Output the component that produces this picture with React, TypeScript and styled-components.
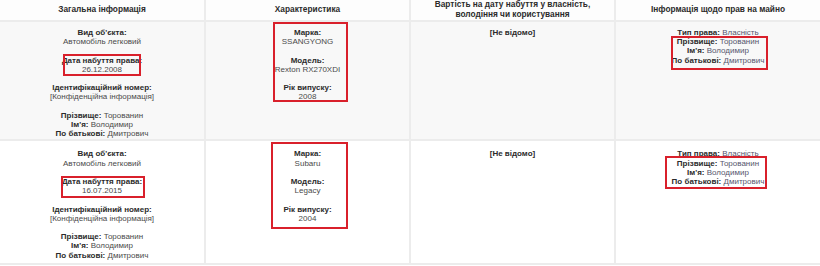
import styled, { createGlobalStyle } from 'styled-components'

const Global = createGlobalStyle`
  html, body {
    margin: 0;
    padding: 0;
    background: #ffffff;
    font-family: "Liberation Sans", Arial, sans-serif;
  }
`

type Inset = [number, number, number, number]

type Person = {
  surname: string
  name: string
  patronymic: string
}

type Vehicle = {
  acquired: string
  brand: string
  model: string
  year: string
  owner: Person
  marks: { date: Inset; specs: Inset; rights: Inset }
}

const vehicles: Vehicle[] = [
  {
    acquired: '26.12.2008',
    brand: 'SSANGYONG',
    model: 'Rexton RX270XDI',
    year: '2008',
    owner: { surname: 'Торованин', name: 'Володимир', patronymic: 'Дмитрович' },
    marks: { date: [-2, 59, -2, 59], specs: [-6, 57, 0, 63], rights: [-1, 48, -5, 51] },
  },
  {
    acquired: '16.07.2015',
    brand: 'Subaru',
    model: 'Legacy',
    year: '2004',
    owner: { surname: 'Торованин', name: 'Володимир', patronymic: 'Дмитрович' },
    marks: { date: [-1, 55, -3, 57], specs: [-7, 57, -6, 61], rights: [-3, 49, -3, 45] },
  },
]

const Table = styled.table`
  width: 820px;
  border-collapse: collapse;
  table-layout: fixed;
  font-size: 8px;
  line-height: 9.2px;
  color: #333;
`

const Head = styled.th`
  height: 19px;
  padding: 0 4px 1px;
  border: 2px solid #ececec;
  border-top: none;
  background: #fdfdfd;
  font-size: 8.3px;
  font-weight: bold;
  color: #2b2b2b;
  text-align: center;
  vertical-align: middle;

  &:first-child { border-left: none; }
  &:last-child { border-right: none; }
`

const Row = styled.tr<{ $shaded?: boolean }>`
  background: ${(p) => (p.$shaded ? '#f8f8f8' : '#ffffff')};
`

const Cell = styled.td<{ $top: number; $bottom: number }>`
  padding: ${(p) => p.$top}px 4px ${(p) => p.$bottom}px;
  border: 2px solid #ececec;
  text-align: center;
  vertical-align: top;

  &:first-child { border-left: none; }
  &:last-child { border-right: none; }
`

const Block = styled.div`
  & + & { margin-top: 9.2px; }
`

const Line = styled.div``

const Label = styled.b`
  font-weight: bold;
  color: #2b2b2b;
`

const Value = styled.span<{ $tone?: 'plain' | 'muted' }>`
  color: ${(p) => (p.$tone === 'muted' ? '#56566e' : '#4a4a4a')};
`

const Mark = styled.div<{ $inset: Inset }>`
  position: relative;

  &::after {
    content: '';
    position: absolute;
    top: ${(p) => p.$inset[0]}px;
    right: ${(p) => p.$inset[1]}px;
    bottom: ${(p) => p.$inset[2]}px;
    left: ${(p) => p.$inset[3]}px;
    border: 2px solid #d9202b;
    pointer-events: none;
  }
`

function Field({ label, value }: { label: string; value: string }) {
  return (
    <Block>
      <Line><Label>{label}</Label></Line>
      <Line><Value>{value}</Value></Line>
    </Block>
  )
}

function Inline({ label, value, tone }: { label: string; value: string; tone?: 'plain' | 'muted' }) {
  return (
    <Line>
      <Label>{label}</Label> <Value $tone={tone}>{value}</Value>
    </Line>
  )
}

type RowProps = { v: Vehicle; shaded?: boolean; top: number; bottom: number }

function VehicleRow({ v, shaded, top, bottom }: RowProps) {
  return (
    <Row $shaded={shaded}>
      <Cell $top={top} $bottom={bottom}>
        <Field label="Вид об'єкта:" value="Автомобіль легковий" />
        <Block>
          <Mark $inset={v.marks.date}>
            <Line><Label>Дата набуття права:</Label></Line>
            <Line><Value>{v.acquired}</Value></Line>
          </Mark>
        </Block>
        <Field label="Ідентифікаційний номер:" value="[Конфіденційна інформація]" />
        <Block>
          <Inline label="Прізвище:" value={v.owner.surname} />
          <Inline label="Ім'я:" value={v.owner.name} />
          <Inline label="По батькові:" value={v.owner.patronymic} />
        </Block>
      </Cell>
      <Cell $top={top} $bottom={bottom}>
        <Mark $inset={v.marks.specs}>
          <Field label="Марка:" value={v.brand} />
          <Field label="Модель:" value={v.model} />
          <Field label="Рік випуску:" value={v.year} />
        </Mark>
      </Cell>
      <Cell $top={top} $bottom={bottom}>
        <Label>[Не відомо]</Label>
      </Cell>
      <Cell $top={top} $bottom={bottom}>
        <Inline label="Тип права:" value="Власність" tone="muted" />
        <Mark $inset={v.marks.rights}>
          <Inline label="Прізвище:" value={v.owner.surname} tone="muted" />
          <Inline label="Ім'я:" value={v.owner.name} tone="muted" />
          <Inline label="По батькові:" value={v.owner.patronymic} tone="muted" />
        </Mark>
      </Cell>
    </Row>
  )
}

export default function App() {
  return (
    <>
      <Global />
      <Table>
        <thead>
          <tr>
            <Head>Загальна інформація</Head>
            <Head>Характеристика</Head>
            <Head>Вартість на дату набуття у власність,<br />володіння чи користування</Head>
            <Head>Інформація щодо прав на майно</Head>
          </tr>
        </thead>
        <tbody>
          <VehicleRow v={vehicles[0]} shaded top={6} bottom={1} />
          <VehicleRow v={vehicles[1]} top={8} bottom={3} />
        </tbody>
      </Table>
    </>
  )
}
